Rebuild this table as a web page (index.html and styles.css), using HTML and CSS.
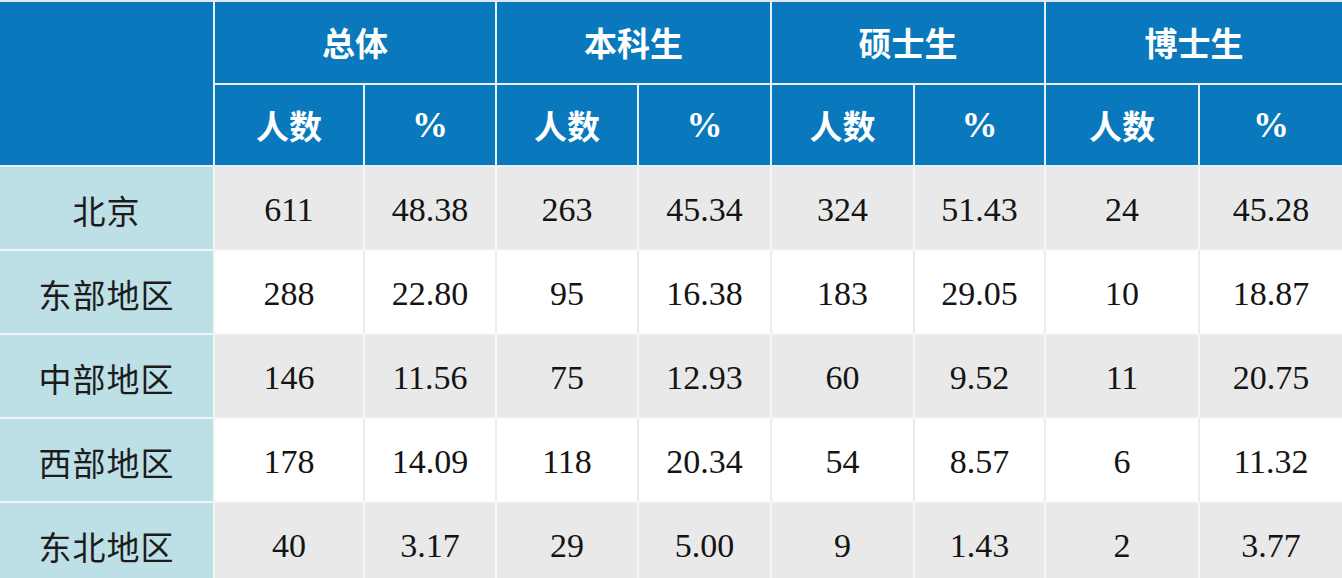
FILE: index.html
```html
<!DOCTYPE html>
<html lang="zh">
<head>
<meta charset="utf-8">
<title>毕业生地区分布</title>
<link rel="stylesheet" href="styles.css">
</head>
<body>
<table class="stats">
  <colgroup>
    <col class="c0"><col class="c1"><col class="c2"><col class="c3"><col class="c4"><col class="c5"><col class="c6"><col class="c7"><col class="c8">
  </colgroup>
  <thead>
    <tr class="h1">
      <th rowspan="2" class="corner"></th>
      <th colspan="2">总体</th>
      <th colspan="2">本科生</th>
      <th colspan="2">硕士生</th>
      <th colspan="2">博士生</th>
    </tr>
    <tr class="h2">
      <th>人数</th><th class="pct">%</th>
      <th>人数</th><th class="pct">%</th>
      <th>人数</th><th class="pct">%</th>
      <th>人数</th><th class="pct">%</th>
    </tr>
  </thead>
  <tbody>
    <tr class="gray">
      <th class="region">北京</th>
      <td>611</td><td>48.38</td><td>263</td><td>45.34</td><td>324</td><td>51.43</td><td>24</td><td>45.28</td>
    </tr>
    <tr class="white">
      <th class="region">东部地区</th>
      <td>288</td><td>22.80</td><td>95</td><td>16.38</td><td>183</td><td>29.05</td><td>10</td><td>18.87</td>
    </tr>
    <tr class="gray">
      <th class="region">中部地区</th>
      <td>146</td><td>11.56</td><td>75</td><td>12.93</td><td>60</td><td>9.52</td><td>11</td><td>20.75</td>
    </tr>
    <tr class="white">
      <th class="region">西部地区</th>
      <td>178</td><td>14.09</td><td>118</td><td>20.34</td><td>54</td><td>8.57</td><td>6</td><td>11.32</td>
    </tr>
    <tr class="gray">
      <th class="region">东北地区</th>
      <td>40</td><td>3.17</td><td>29</td><td>5.00</td><td>9</td><td>1.43</td><td>2</td><td>3.77</td>
    </tr>
  </tbody>
</table>
</body>
</html>
```

FILE: styles.css
```css
html, body {
  margin: 0;
  padding: 0;
  background: #ffffff;
  overflow: hidden;
}

.stats {
  width: 1342px;
  table-layout: fixed;
  border-collapse: collapse;
  border-top: 2px solid #dfe9ef;
}

.c0 { width: 214px; }
.c1 { width: 150px; }
.c2 { width: 132px; }
.c3 { width: 142px; }
.c4 { width: 133px; }
.c5 { width: 143px; }
.c6 { width: 131px; }
.c7 { width: 154px; }
.c8 { width: 143px; }

.stats th,
.stats td {
  padding: 0;
  text-align: center;
  vertical-align: middle;
  border: 2px solid #ffffff;
}

.stats tr:first-child th { border-top: 0; }
.stats th:first-child,
.stats td:first-child { border-left: 0; }
.stats th:last-child,
.stats td:last-child { border-right: 0; }

.stats thead th {
  background: #0a78bc;
  color: #ffffff;
  font-family: "Noto Sans CJK SC", "Noto Sans", sans-serif;
  font-weight: 700;
  font-size: 33px;
  line-height: 1;
  border-color: #e6f0f5;
}

.stats .h1 th { height: 81px; }
.stats .h2 th { height: 80px; }

.stats thead th.pct {
  font-family: "Liberation Serif", serif;
  font-size: 36px;
  line-height: 1;
}

.stats tbody tr { height: 84px; }

.stats tbody th.region {
  background: #bddfe6;
  color: #1c1c1c;
  font-family: "Noto Sans CJK SC", sans-serif;
  font-weight: 400;
  font-size: 33px;
  letter-spacing: 1px;
  border-color: #eef6f8;
  padding-top: 3px;
}

.stats tbody td {
  font-family: "Liberation Serif", "Times New Roman", serif;
  font-size: 34px;
  color: #141414;
  padding-top: 3px;
}

.stats tr.gray td {
  background: #e9e9e9;
  border-color: #f6f6f6;
}

.stats tr.white td {
  background: #ffffff;
  border-color: #ececec;
}

.stats tr.white td { border-top-color: #f6f6f6; border-bottom-color: #f6f6f6; }
```
